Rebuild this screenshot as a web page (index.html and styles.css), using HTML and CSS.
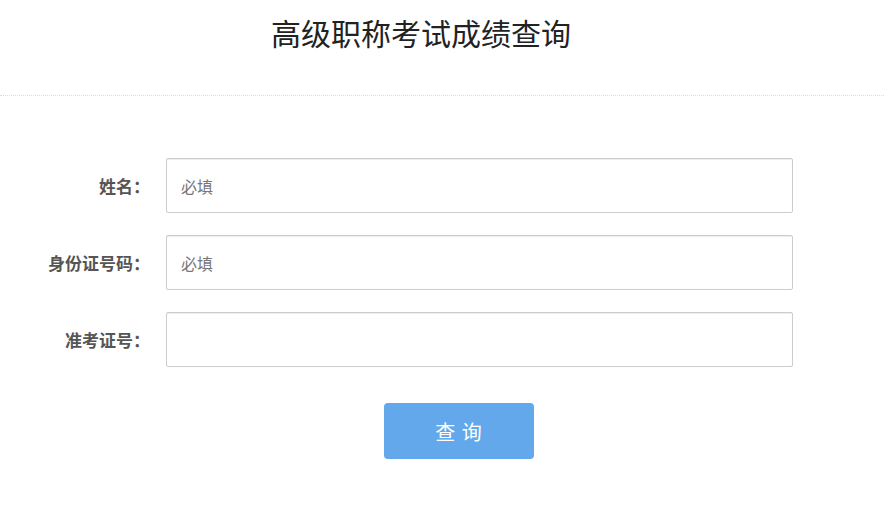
FILE: index.html
```html
<!DOCTYPE html>
<html lang="zh-CN">
<head>
    <meta charset="UTF-8">
    <meta name="viewport" content="width=device-width, initial-scale=1.0">
    <title>高级职称考试成绩查询</title>
    <link rel="stylesheet" href="styles.css">
</head>
<body>
    <!-- Header -->
    <div class="page-header">
        <h1>高级职称考试成绩查询</h1>
    </div>

    <!-- Query Form -->
    <form class="query-form" onsubmit="return false;">
        <div class="form-row">
            <label for="name">姓名：</label>
            <input type="text" id="name" placeholder="必填">
        </div>
        <div class="form-row">
            <label for="idcard">身份证号码：</label>
            <input type="text" id="idcard" placeholder="必填">
        </div>
        <div class="form-row">
            <label for="examno">准考证号：</label>
            <input type="text" id="examno">
        </div>
        <div class="form-actions">
            <button type="submit" class="btn-query">查 询</button>
        </div>
    </form>
</body>
</html>
```

FILE: styles.css
```css
/* General Reset */
* {
    margin: 0;
    padding: 0;
    box-sizing: border-box;
}

body {
    font-family: "Microsoft YaHei", "Noto Sans CJK SC", "Noto Sans", sans-serif;
    background-color: #fff;
    color: #333;
}

/* Header */
.page-header {
    height: 96px;
    border-bottom: 1px dotted #ddd;
    padding-top: 12px;
    padding-right: 42px;
    text-align: center;
}

.page-header h1 {
    font-size: 30px;
    font-weight: 400;
    line-height: 40px;
    color: #222;
}

/* Form */
.query-form {
    padding-top: 62px;
}

.form-row {
    display: flex;
    align-items: center;
    margin-bottom: 22px;
}

.form-row label {
    width: 150px;
    text-align: right;
    font-size: 17px;
    font-weight: 700;
    color: #555;
}

.form-row input {
    margin-left: 16px;
    width: 627px;
    height: 55px;
    padding: 0 14px;
    border: 1px solid #ccc;
    border-radius: 2px;
    box-shadow: inset 0 1px 1px rgba(0, 0, 0, 0.075);
    font-family: inherit;
    font-size: 16px;
    color: #333;
    outline: none;
}

.form-row input::placeholder {
    color: #777;
}

.form-actions {
    padding-top: 14px;
    padding-left: 384px;
}

/* Button */
.btn-query {
    width: 150px;
    height: 56px;
    border: none;
    border-radius: 4px;
    background-color: #63a8eb;
    color: #fff;
    font-family: inherit;
    font-size: 20px;
    letter-spacing: 1px;
    cursor: pointer;
}

.btn-query:hover {
    background-color: #4e98e0;
}
```
